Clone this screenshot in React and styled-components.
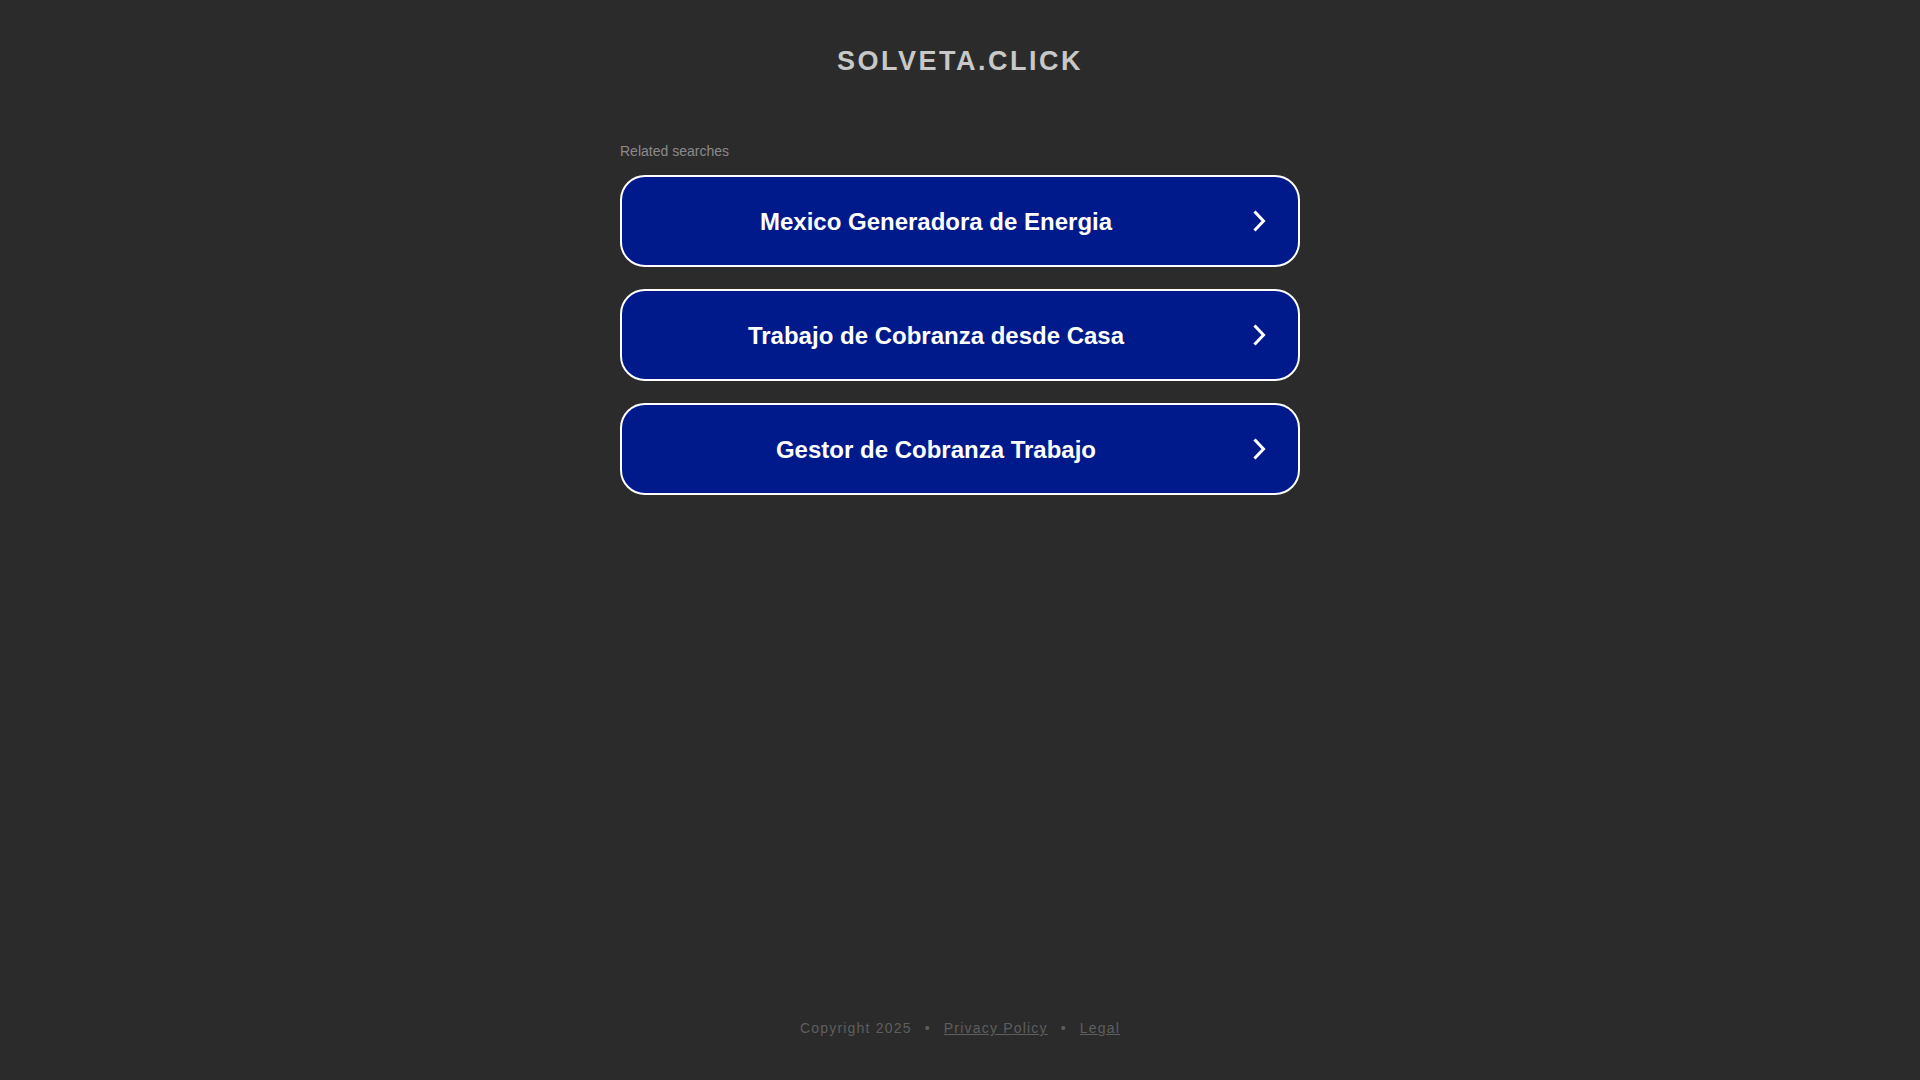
import React from "react";
import styled, { createGlobalStyle } from "styled-components";

const GlobalStyle = createGlobalStyle`
  html, body {
    margin: 0;
    padding: 0;
    background: #2b2b2b;
  }
  body {
    font-family: "Liberation Sans", Arial, sans-serif;
  }
`;

const Page = styled.div`
  min-height: 100vh;
  display: flex;
  flex-direction: column;
  align-items: center;
  box-sizing: border-box;
  padding-top: 46px;
  padding-bottom: 43px;
`;

const Title = styled.h1`
  margin: 0;
  font-size: 27px;
  line-height: 31.2px;
  font-weight: 700;
  letter-spacing: 2.5px;
  color: #c8c8c8;
  text-transform: uppercase;
`;

const Searches = styled.section`
  width: 680px;
  margin-top: 66px;
  display: flex;
  flex-direction: column;
`;

const Label = styled.div`
  font-size: 14px;
  line-height: 16.8px;
  color: #8a8a8a;
  margin-bottom: 15px;
`;

const Card = styled.a`
  display: flex;
  align-items: center;
  height: 92px;
  box-sizing: border-box;
  border: 2px solid #ffffff;
  border-radius: 25px;
  background: #011a8b;
  color: #ffffff;
  text-decoration: none;
  cursor: pointer;
  & + & {
    margin-top: 22px;
  }
`;

const CardText = styled.span`
  flex: 1;
  text-align: center;
  font-size: 24px;
  line-height: 28.8px;
  font-weight: 700;
  padding-top: 3px;
`;

const Arrow = styled.span`
  width: 48px;
  display: flex;
  justify-content: flex-start;
  align-items: center;
  position: relative;
  left: -3px;
`;

const Footer = styled.footer`
  margin-top: auto;
  display: flex;
  align-items: center;
  font-size: 14px;
  line-height: 16.8px;
  letter-spacing: 1.2px;
  color: #5e5e5e;
`;

const Dot = styled.span`
  margin: 0 13px;
`;

const FooterLink = styled.a`
  color: #5e5e5e;
  text-decoration: underline;
  cursor: pointer;
`;

const Chevron = () => (
  <svg width="24" height="24" viewBox="0 0 24 24" fill="none">
    <polyline
      points="8.5,3.5 16.5,12 8.5,20.5"
      stroke="#ffffff"
      strokeWidth="3"
      strokeLinecap="square"
      strokeLinejoin="miter"
    />
  </svg>
);

const searches = [
  "Mexico Generadora de Energia",
  "Trabajo de Cobranza desde Casa",
  "Gestor de Cobranza Trabajo",
];

const App = () => (
  <>
    <GlobalStyle />
    <Page>
      <Title>solveta.click</Title>
      <Searches>
        <Label>Related searches</Label>
        {searches.map((item) => (
          <Card key={item}>
            <CardText>{item}</CardText>
            <Arrow>
              <Chevron />
            </Arrow>
          </Card>
        ))}
      </Searches>
      <Footer>
        <span>Copyright 2025</span>
        <Dot>•</Dot>
        <FooterLink>Privacy Policy</FooterLink>
        <Dot>•</Dot>
        <FooterLink>Legal</FooterLink>
      </Footer>
    </Page>
  </>
);

export default App;
